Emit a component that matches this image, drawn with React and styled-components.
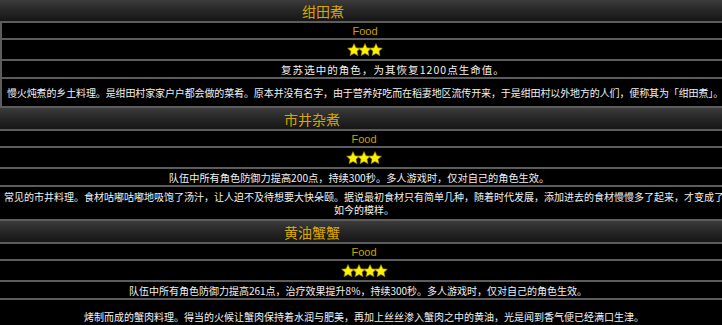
import React from 'react'
import styled, { createGlobalStyle } from 'styled-components'

const GlobalStyle = createGlobalStyle`
  html, body {
    margin: 0;
    padding: 0;
    background: #000;
    overflow: hidden;
  }
  body {
    font-family: "Liberation Sans", "Noto Sans CJK SC", sans-serif;
    color: #f0f0f0;
  }
`

const Page = styled.div`
  width: 728px;
  display: flex;
  flex-direction: column;
`

const Item = styled.section`
  display: flex;
  flex-direction: column;
  border-top: ${p => (p.first ? 'none' : '2px solid #5c5c5c')};
  border-left: ${p => (p.edge ? '2px solid #5c5c5c' : 'none')};
`

const Header = styled.div`
  height: 21px;
  display: flex;
  align-items: center;
  justify-content: center;
  padding-right: ${p => p.shift * 2}px;
  background: linear-gradient(#3c3c3c 0%, #282828 45%, #161616 100%);
  border-bottom: 2px solid #5c5c5c;
  color: #d9a500;
  font-family: "Noto Sans CJK SC", sans-serif;
  font-size: 14px;
`

const Row = styled.div`
  height: ${p => p.h}px;
  display: flex;
  align-items: center;
  justify-content: center;
  border-bottom: 2px solid #5c5c5c;
  font-family: "Noto Sans CJK SC", sans-serif;
`

const Kind = styled(Row)`
  color: #c9a300;
  font-family: "Liberation Sans", sans-serif;
  font-size: 11px;
`

const Effect = styled(Row)`
  font-size: ${p => p.size}px;
  letter-spacing: ${p => p.spacing}px;
  padding-left: ${p => Math.max(p.shift, 0) * 2}px;
  padding-right: ${p => Math.max(-p.shift, 0) * 2}px;
  white-space: nowrap;
`

const Desc = styled.div`
  padding: ${p => p.pad}px 0;
  text-align: center;
  font-family: "Noto Sans CJK SC", sans-serif;
  font-size: 10px;
  letter-spacing: ${p => p.spacing}px;
  line-height: 13px;
  color: #f0f0f0;
`

const Stars = styled.div`
  display: flex;
  align-items: center;
`

const StarIcon = styled.svg`
  width: 14px;
  height: 14px;
  margin-left: -3px;
  &:first-child { margin-left: 0; }
`

function Star() {
  return (
    <StarIcon viewBox="0 0 24 24">
      <path
        d="M12 1l3.3 7.1 7.7.8-5.8 5.2 1.7 7.7L12 17.9 5.1 21.8 6.8 14.1 1 8.9l7.7-.8z"
        fill="#fff200"
        stroke="#8a7a00"
        strokeWidth="1.1"
        strokeLinejoin="round"
      />
    </StarIcon>
  )
}

const foods = [
  {
    name: '绀田煮',
    shift: 41,
    stars: 3,
    effect: '复苏选中的角色，为其恢复1200点生命值。',
    effectSize: 10.5,
    effectSpacing: 1.05,
    effectShift: 28,
    desc: '慢火炖煮的乡土料理。是绀田村家家户户都会做的菜肴。原本并没有名字，由于营养好吃而在稻妻地区流传开来，于是绀田村以外地方的人们，便称其为「绀田煮」。',
    spacing: -0.12,
    pad: 7,
  },
  {
    name: '市井杂煮',
    shift: 52,
    stars: 3,
    effect: '队伍中所有角色防御力提高200点，持续300秒。多人游戏时，仅对自己的角色生效。',
    effectSize: 10.2,
    effectSpacing: 0,
    effectShift: -5,
    desc: '常见的市井料理。食材咕嘟咕嘟地吸饱了汤汁，让人迫不及待想要大快朵颐。据说最初食材只有简单几种，随着时代发展，添加进去的食材慢慢多了起来，才变成了如今的模样。',
    spacing: 0,
    pad: 3,
  },
  {
    name: '黄油蟹蟹',
    shift: 52,
    stars: 4,
    effect: '队伍中所有角色防御力提高261点，治疗效果提升8%，持续300秒。多人游戏时，仅对自己的角色生效。',
    effectSize: 10,
    effectSpacing: 0,
    effectShift: -6,
    desc: '烤制而成的蟹肉料理。得当的火候让蟹肉保持着水润与肥美，再加上丝丝渗入蟹肉之中的黄油，光是闻到香气便已经满口生津。',
    spacing: 0,
    pad: 10,
  },
]

export default function App() {
  return (
    <>
      <GlobalStyle />
      <Page>
        {foods.map((f, i) => (
          <Item key={f.name} first={i === 0}>
            <Header shift={f.shift}>{f.name}</Header>
            <Item first edge={i === 0}>
              <Kind h={15}>Food</Kind>
              <Row h={19}>
                <Stars>
                  {Array.from({ length: f.stars }).map((_, k) => (
                    <Star key={k} />
                  ))}
                </Stars>
              </Row>
              <Effect
                h={16}
                size={f.effectSize}
                spacing={f.effectSpacing}
                shift={f.effectShift}
              >
                {f.effect}
              </Effect>
              <Desc pad={f.pad} spacing={f.spacing}>{f.desc}</Desc>
            </Item>
          </Item>
        ))}
      </Page>
    </>
  )
}
